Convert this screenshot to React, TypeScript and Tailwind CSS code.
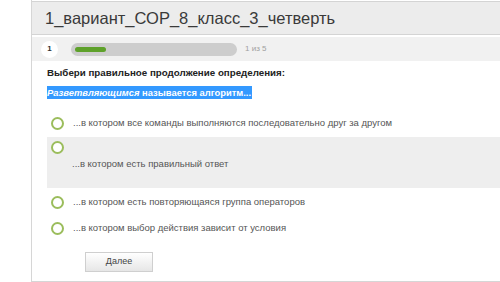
const options = [
  { id: "a", text: "...в котором все команды выполняются последовательно друг за другом", hovered: false },
  { id: "b", text: "...в котором есть правильный ответ", hovered: true },
  { id: "c", text: "...в котором есть повторяющаяся группа операторов", hovered: false },
  { id: "d", text: "...в котором выбор действия зависит от условия", hovered: false },
];

function Radio() {
  return <span className="block h-[13px] w-[13px] shrink-0 rounded-full border-2 border-[#9bbd5c] bg-white" />;
}

export default function App() {
  return (
    <div className="h-[282px] w-[500px] overflow-hidden bg-white font-['Liberation_Sans',Arial,sans-serif]">
      <div className="ml-[31px] flex h-full flex-col border-l border-b border-[#d6d6d6]">
        <div className="mt-[1px] flex h-[34px] items-center border-y border-[#d4d4d4] bg-[#ececec] pl-[13px]">
          <h1 className="text-[16.5px] leading-none text-[#3a3a3a]">1_вариант_СОР_8_класс_3_четверть</h1>
        </div>

        <div className="mt-[2px] flex h-[24px] items-center bg-[#f1f1f1] pl-[9px]">
          <span className="flex h-[17px] w-[17px] items-center justify-center rounded-full bg-white text-[8px] font-bold text-[#333]">
            1
          </span>
          <div className="ml-[13px] flex h-[13px] w-[166px] items-center rounded-full bg-[#cdcdcd] px-[4px]">
            <div className="h-[5px] w-[31px] rounded-full bg-[#5ea12a]" />
          </div>
          <span className="ml-[8px] text-[8px] text-[#a0a0a0]">1 из 5</span>
        </div>

        <div className="pl-[15px] pt-[5px]">
          <p className="text-[9.75px] font-bold leading-[13px] text-[#222]">Выбери правильное продолжение определения:</p>
          <p className="mt-[4px] inline-block bg-[#3399ff] pr-[1px] text-[9.4px] font-bold leading-[13px] text-white">
            <i>Разветвляющимся</i> называется алгоритм...
          </p>

          <ul className="mt-[8px] flex flex-col gap-[2px]">
            {options.map((o) =>
              o.hovered ? (
                <li key={o.id} className="h-[51px] bg-[#eeeeee] pt-[4px]">
                  <div className="pl-[4px]">
                    <Radio />
                  </div>
                  <p className="mt-[4px] pl-[25px] text-[9.5px] leading-[12px] text-[#555]">{o.text}</p>
                </li>
              ) : (
                <li key={o.id} className="flex h-[24px] items-center gap-[9px] pl-[4px]">
                  <Radio />
                  <span className="text-[9.5px] text-[#555]">{o.text}</span>
                </li>
              )
            )}
          </ul>

          <button className="ml-[38px] mt-[12px] h-[20px] w-[68px] border border-[#cfcfcf] bg-gradient-to-b from-white to-[#e6e6e6] text-[9px] text-[#444]">
            Далее
          </button>
        </div>
      </div>
    </div>
  );
}
